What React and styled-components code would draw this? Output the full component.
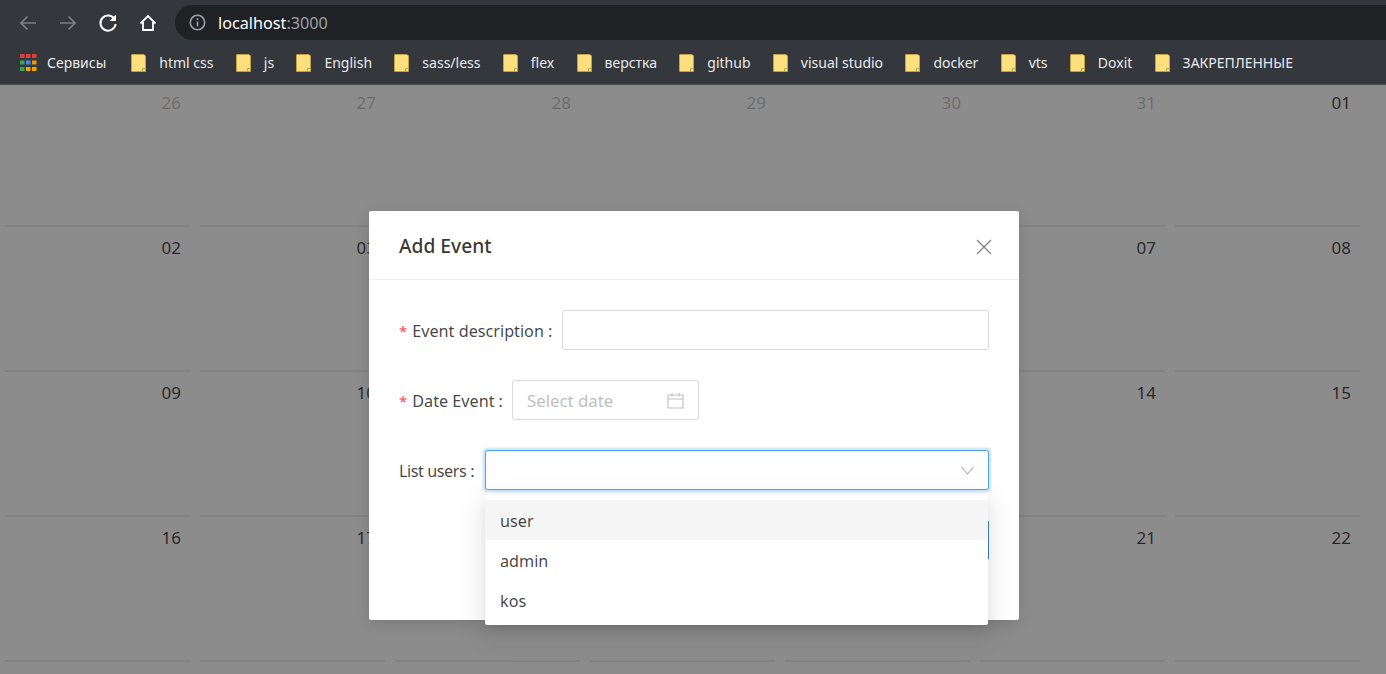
import styled, { createGlobalStyle } from "styled-components";

const GlobalStyle = createGlobalStyle`
  html, body {
    margin: 0;
    height: 100%;
    overflow: hidden;
    background: #fff;
  }
  * {
    box-sizing: border-box;
  }
  #root {
    height: 100%;
  }
`;

const FONT = `"Noto Sans", "Open Sans", sans-serif`;

const bookmarks = [
  "html css",
  "js",
  "English",
  "sass/less",
  "flex",
  "верстка",
  "github",
  "visual studio",
  "docker",
  "vts",
  "Doxit",
  "ЗАКРЕПЛЕННЫЕ",
];

// last row only shows its top border in the window, so no numbers there
const days = [
  ["26", true], ["27", true], ["28", true], ["29", true], ["30", true], ["31", true], ["01"],
  ["02"], ["03"], ["04"], ["05"], ["06"], ["07"], ["08"],
  ["09"], ["10"], ["11"], ["12"], ["13"], ["14"], ["15"],
  ["16"], ["17"], ["18"], ["19"], ["20"], ["21"], ["22"],
  [""], [""], [""], [""], [""], [""], [""],
];

const Page = styled.div`
  height: 100%;
  display: flex;
  flex-direction: column;
  font-family: ${FONT};
`;

const BrowserBar = styled.header`
  flex: none;
  height: 85px;
  background: #34373b;
  border-bottom: 1px solid #505154;
  display: flex;
  flex-direction: column;
`;

const Toolbar = styled.div`
  height: 45px;
  display: flex;
  align-items: center;
  padding: 0 0 0 18px;
`;

const NavButton = styled.span`
  width: 40px;
  height: 22px;
  display: flex;
  align-items: center;
  color: ${(p) => (p.$off ? "#7d7f83" : "#fff")};
`;

const Omnibox = styled.div`
  flex: 1;
  height: 35px;
  margin-left: -3px;
  background: #202124;
  border-radius: 18px 0 0 18px;
  display: flex;
  align-items: center;
  padding-left: 14px;
  font-size: 16.2px;
  color: #fff;
`;

const InfoIcon = styled.svg`
  width: 17px;
  height: 17px;
  margin-right: 12px;
  color: #9aa0a6;
`;

const Port = styled.span`
  color: #9aa0a6;
`;

const BookmarkBar = styled.nav`
  height: 35px;
  display: flex;
  align-items: center;
  padding-left: 20px;
  font-size: 14px;
  color: #e8eaed;
`;

const AppsLink = styled.span`
  display: flex;
  align-items: center;
  gap: 10px;
  margin-right: 25px;
`;

const Bookmark = styled.span`
  display: flex;
  align-items: center;
  gap: 13px;
  margin-right: 22.3px;
  white-space: nowrap;
`;

const Main = styled.main`
  position: relative;
  flex: 1;
  overflow: hidden;
`;

const Calendar = styled.div`
  margin-top: -5px;
  width: 1365px;
  display: grid;
  grid-template-columns: repeat(7, 195px);
  grid-auto-rows: 145px;
`;

const DayCell = styled.div`
  margin: 0 5px;
  border-top: 2px solid #efefef;
  padding: 7px 9px 0 0;
  text-align: right;
  font-size: 17px;
  line-height: 28px;
  color: ${(p) => (p.$muted ? "rgba(0,0,0,.25)" : "rgba(0,0,0,.74)")};
`;

const Mask = styled.div`
  position: absolute;
  inset: 0;
  background: rgba(0, 0, 0, 0.45);
  display: flex;
  justify-content: center;
  padding: 126px 0 0 2px;
`;

const Dialog = styled.section`
  width: 650px;
  height: 409px;
  background: #fff;
  border-radius: 2px;
  box-shadow: 0 4px 15px rgba(0, 0, 0, 0.12);
`;

const DialogHeader = styled.div`
  height: 69px;
  border-bottom: 1px solid #f0f0f0;
  padding: 0 26px 0 30px;
  display: flex;
  align-items: center;
  justify-content: space-between;
`;

const DialogTitle = styled.h2`
  margin: 0;
  font-size: 19.2px;
  font-weight: 500;
  color: rgba(0, 0, 0, 0.8);
`;

const CloseIcon = styled.svg`
  width: 18px;
  height: 18px;
  margin-top: 4px;
  color: #808080;
`;

const Form = styled.form`
  padding: 30px 30px 0;
  display: flex;
  flex-direction: column;
  gap: 30px;
`;

const FormRow = styled.div`
  position: relative;
  height: 40px;
  display: flex;
  align-items: center;
`;

const Label = styled.label`
  flex: none;
  width: ${(p) => p.$width}px;
  padding-top: 1px;
  display: flex;
  align-items: center;
  font-size: 16.2px;
  letter-spacing: ${(p) => (p.$tight ? "-0.45px" : "0")};
  color: rgba(0, 0, 0, 0.74);
  white-space: nowrap;

  &::after {
    content: ":";
    margin-left: 4px;
  }
`;

const Star = styled.span`
  color: #ff4d4f;
  margin-right: 5px;
  font-size: 15px;
`;

const Field = styled.div`
  flex: ${(p) => (p.$narrow ? "none" : "1")};
  width: ${(p) => (p.$narrow ? "187px" : "auto")};
  height: 40px;
  background: #fff;
  border: 1px solid ${(p) => (p.$focus ? "#4aa3e0" : "#d9d9d9")};
  border-radius: 2.5px;
  box-shadow: ${(p) => (p.$focus ? "0 0 0 2.5px rgba(24,144,255,.2)" : "none")};
  display: flex;
  align-items: center;
  justify-content: space-between;
  padding: 0 14px;
  font-size: 16.8px;
  color: #bfbfbf;
`;

const Actions = styled.div`
  height: 40px;
  display: flex;
  justify-content: flex-end;
`;

const SubmitButton = styled.div`
  width: 80px;
  height: 40px;
  background: #3a86c4;
  border-radius: 2.5px;
`;

const Dropdown = styled.ul`
  position: absolute;
  left: 86px;
  right: 1px;
  top: 45px;
  margin: 0;
  padding: 5px 0;
  list-style: none;
  background: #fff;
  border-radius: 2.5px;
  box-shadow: 0 3px 6px -4px rgba(0, 0, 0, 0.12), 0 6px 16px rgba(0, 0, 0, 0.08),
    0 9px 28px 8px rgba(0, 0, 0, 0.05);
`;

const Option = styled.li`
  height: 40px;
  padding: 1px 15px 0;
  display: flex;
  align-items: center;
  font-size: 16.2px;
  color: rgba(0, 0, 0, 0.74);
  background: ${(p) => (p.$active ? "#f5f5f5" : "transparent")};
`;

const FolderIcon = () => (
  <svg width="15" height="18" viewBox="0 0 15 18">
    <path d="M.5 1Q.5.5 1 .5h12l1.500 1.500v15.500H1Q.5 17.500.5 17z" fill="#fde07d" stroke="#bfa245" />
    <path d="M11.500 17.500v-3h3" fill="none" stroke="#bfa245" />
  </svg>
);

const AppsIcon = () => (
  <svg width="17" height="17" viewBox="0 0 17 17">
    <path d="M0 0h4.500v4H0zM6 0h4.500v4H6zM12 0h4.500v4H12z" fill="#d9413a" />
    <path d="M0 6.500h4.500v4H0z" fill="#34a853" />
    <path d="M6 6.500h4.500v4H6z" fill="#4285f4" />
    <path d="M12 6.500h4.500v4H12z" fill="#f29900" />
    <path d="M0 13h4.500v4H0z" fill="#34a853" />
    <path d="M6 13h4.500v4H6z" fill="#f2a600" />
    <path d="M12 13h4.500v4H12z" fill="#f2a600" />
  </svg>
);

export default function App() {
  return (
    <Page>
      <GlobalStyle />
      <BrowserBar>
        <Toolbar>
          <NavButton $off>
            <svg width="20" height="20" viewBox="0 0 20 20" fill="none" stroke="currentColor" strokeWidth="1.700">
              <path d="M18 10H3M9.500 3.500 3 10l6.500 6.500" />
            </svg>
          </NavButton>
          <NavButton $off>
            <svg width="20" height="20" viewBox="0 0 20 20" fill="none" stroke="currentColor" strokeWidth="1.700">
              <path d="M2 10h15M10.500 3.500 17 10l-6.500 6.500" />
            </svg>
          </NavButton>
          <NavButton>
            <svg width="20" height="20" viewBox="0 0 20 20" fill="none" stroke="currentColor" strokeWidth="2">
              <path d="M16.600 6.200A7.600 7.600 0 1 0 17.600 11" />
              <path d="M18 1.600v6.400h-6.400z" fill="currentColor" stroke="none" />
            </svg>
          </NavButton>
          <NavButton>
            <svg width="20" height="20" viewBox="0 0 20 20" fill="none" stroke="currentColor" strokeWidth="1.800">
              <path d="M2.500 10.500 10 3l7.500 7.500M5 9v8h10V9" />
            </svg>
          </NavButton>
          <Omnibox>
            <InfoIcon viewBox="0 0 17 17" fill="none" stroke="currentColor" strokeWidth="1.600">
              <circle cx="8.500" cy="8.500" r="7.200" />
              <path d="M8.500 7.500v5M8.500 4.200v1.800" />
            </InfoIcon>
            localhost<Port>:3000</Port>
          </Omnibox>
        </Toolbar>
        <BookmarkBar>
          <AppsLink>
            <AppsIcon />
            Сервисы
          </AppsLink>
          {bookmarks.map((name) => (
            <Bookmark key={name}>
              <FolderIcon />
              {name}
            </Bookmark>
          ))}
        </BookmarkBar>
      </BrowserBar>
      <Main>
        <Calendar>
          {days.map(([day, muted], i) => (
            <DayCell key={i} $muted={muted}>
              {day}
            </DayCell>
          ))}
        </Calendar>
        <Mask>
          <Dialog>
            <DialogHeader>
              <DialogTitle>Add Event</DialogTitle>
              <CloseIcon viewBox="0 0 18 18" fill="none" stroke="currentColor" strokeWidth="1.300">
                <path d="M2 2l14 14M16 2 2 16" />
              </CloseIcon>
            </DialogHeader>
            <Form>
              <FormRow>
                <Label $width={163}>
                  <Star>*</Star>Event description
                </Label>
                <Field />
              </FormRow>
              <FormRow>
                <Label $width={113}>
                  <Star>*</Star>Date Event
                </Label>
                <Field $narrow>
                  Select date
                  <svg width="17" height="17" viewBox="0 0 17 17" fill="none" stroke="#bfbfbf" strokeWidth="1.100">
                    <path d="M1 3h15v13H1zM1 7h15M5 1v3.500M12 1v3.500" />
                  </svg>
                </Field>
              </FormRow>
              <FormRow>
                <Label $width={86} $tight>List users</Label>
                <Field $focus>
                  <span />
                  <svg width="13" height="9" viewBox="0 0 13 9" fill="none" stroke="#bfbfbf" strokeWidth="1.200">
                    <path d="M.5 1 6.500 8 12.500 1" />
                  </svg>
                </Field>
                <Dropdown>
                  <Option $active>user</Option>
                  <Option>admin</Option>
                  <Option>kos</Option>
                </Dropdown>
              </FormRow>
              <Actions>
                <SubmitButton />
              </Actions>
            </Form>
          </Dialog>
        </Mask>
      </Main>
    </Page>
  );
}
